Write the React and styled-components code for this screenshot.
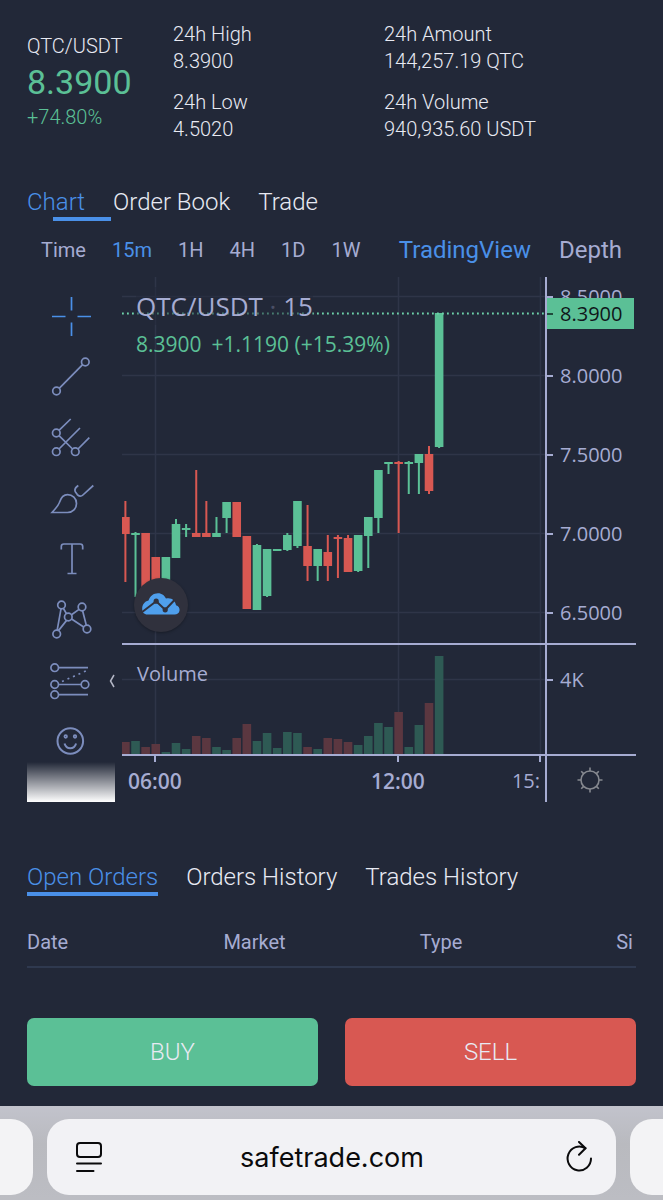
import React, { useState } from "react";
import styled, { createGlobalStyle } from "styled-components";

const colors = {
  background: "#222838",
  text: "#e8eaf3",
  muted: "#a6acd2",
  icon: "#7c8dbd",
  blue: "#4a90e8",
  green: "#5bc096",
  red: "#d85852",
  grid: "#2f3548",
};

const stats = [
  [
    { label: "24h High", value: "8.3900" },
    { label: "24h Low", value: "4.5020" },
  ],
  [
    { label: "24h Amount", value: "144,257.19 QTC" },
    { label: "24h Volume", value: "940,935.60 USDT" },
  ],
];

const intervals = ["Time", "15m", "1H", "4H", "1D", "1W"];
const prices = ["8.5000", "8.0000", "7.5000", "7.0000", "6.5000"];

// up, high, body top, body bottom, low, volume
const candles = [
  [0, 224, 240, 257, 305, 12],
  [1, 255, 256, 258, 320, 13],
  [0, 256, 256, 313, 313, 7],
  [0, 280, 280, 313, 313, 10],
  [1, 280, 280, 313, 313, 2],
  [1, 242, 247, 281, 281, 11],
  [1, 247, 251, 253, 260, 5],
  [0, 193, 256, 260, 260, 18],
  [0, 224, 256, 260, 260, 16],
  [1, 240, 256, 260, 260, 7],
  [1, 225, 225, 241, 256, 4],
  [0, 225, 225, 260, 260, 16],
  [0, 259, 259, 332, 332, 30],
  [1, 267, 268, 333, 333, 13],
  [1, 272, 272, 319, 320, 21],
  [1, 272, 272, 274, 274, 6],
  [1, 256, 258, 273, 274, 22],
  [1, 224, 224, 269, 271, 21],
  [0, 228, 269, 289, 304, 7],
  [1, 272, 272, 289, 304, 5],
  [0, 258, 275, 289, 304, 16],
  [0, 258, 260, 262, 301, 15],
  [0, 258, 261, 295, 295, 12],
  [1, 258, 258, 294, 295, 9],
  [1, 240, 240, 259, 291, 18],
  [1, 193, 193, 241, 256, 31],
  [1, 185, 185, 187, 197, 27],
  [0, 184, 185, 187, 256, 42],
  [1, 184, 185, 187, 217, 7],
  [1, 177, 177, 186, 217, 29],
  [0, 169, 177, 214, 217, 51],
  [1, 36, 36, 170, 171, 98],
];

const candleX = (index) => 3.4 + index * 10.12;

const Ring = ({ x, y }) => <circle cx={x} cy={y} r="3.8" />;

const tools = [
  {
    name: "Cross",
    icon: <path d="M4 22.5h13.5M29.5 22.5H43M23.5 3v13.5M23.5 28.5V42" />,
  },
  {
    name: "Trend line",
    icon: (
      <>
        <Ring x={37.3} y={7} />
        <Ring x={8.5} y={36} />
        <path d="M11.2 33.3 34.6 9.7" />
      </>
    ),
  },
  {
    name: "Pitchfork",
    icon: (
      <>
        <Ring x={8.3} y={17} />
        <Ring x={8.3} y={35.7} />
        <Ring x={27.3} y={35.7} />
        <path d="M11 19.7 24.6 33M11 14.3 22.7 3M11 33 32 12M30 33 41.3 21.7" />
      </>
    ),
  },
  {
    name: "Brush",
    icon: (
      <path d="M4 35.5h15.5c5.2 0 9-4 9-9s-4-8.8-9-8.8c-4.6 0-6.6 3.3-8 7.6C10 29.5 7 32 4 35.5ZM30.3 8.5c-3 2-4.3 4-2.8 6.5l1.8 2.6c1.5 1.9 4 1.9 5.6.4L45.3 8.5" />
    ),
  },
  {
    name: "Text",
    icon: <path d="M13.3 11.5V8.5q0-2.5 2.5-2.5h16.4q2.5 0 2.5 2.5v3M24 6v29.5M19.5 35.5h9" />,
  },
  {
    name: "Pattern",
    icon: (
      <>
        <Ring x={13.5} y={6} />
        <Ring x={34} y={8} />
        <Ring x={20.3} y={18} />
        <Ring x={8.7} y={35} />
        <Ring x={39} y={30} />
        <path d="M13 9.8 9.2 31.2M15.3 9.3l3.2 5.4M23.5 15.7l7.5-5.3M34.6 11.8l3.7 14.4M23.6 20 35.7 28M18.6 21.4 10.5 31.6" />
      </>
    ),
  },
  {
    name: "Prediction",
    icon: (
      <>
        <Ring x={6.7} y={7.7} />
        <Ring x={6.7} y={24.5} />
        <Ring x={37} y={24.5} />
        <Ring x={6.7} y={34.7} />
        <path d="M10.5 7.7H40M10.5 24.5h22.7M10.5 34.7H40" />
        <path d="M14 21.5 39 10.5" strokeDasharray="2 4" />
      </>
    ),
  },
  {
    name: "Emoji",
    icon: (
      <>
        <circle cx="22.3" cy="20" r="12.8" strokeWidth="2" />
        <circle cx="17.7" cy="15.5" r="1.3" />
        <circle cx="27" cy="15.5" r="1.3" />
        <path d="M16.5 22.5q1.5 4.8 5.8 4.8t5.8-4.8" strokeWidth="2" />
      </>
    ),
  },
];

function PriceChart() {
  return (
    <Plot viewBox="0 0 423 366" preserveAspectRatio="none" aria-hidden="true">
      <g stroke={colors.grid} strokeWidth="1.5">
        {[19.5, 98.5, 177.5, 256.5, 335.5].map((y) => (
          <line key={y} x1="0" x2="423" y1={y} y2={y} />
        ))}
        <path d="M33.5 0v366M276.5 0v366M418.5 0v366" />
      </g>
      {candles.map(([up, high, top, bottom, low], i) => (
        <g key={i} fill={up ? colors.green : colors.red}>
          <rect x={candleX(i) - 1} y={high} width="2" height={low - high} />
          <rect x={candleX(i) - 4.3} y={top} width="8.6" height={bottom - top} />
        </g>
      ))}
      <line
        x1="0"
        x2="423"
        y1="36.5"
        y2="36.5"
        stroke="#6fd3ab"
        strokeWidth="1.8"
        strokeDasharray="1.8 3.2"
      />
    </Plot>
  );
}

function VolumeChart() {
  return (
    <Plot viewBox="0 0 423 109" preserveAspectRatio="none" aria-hidden="true">
      <path
        d="M0 34.5h423M33.5 0v109M276.5 0v109M418.5 0v109"
        stroke={colors.grid}
        strokeWidth="1.5"
      />
      {candles.map((candle, i) => (
        <rect
          key={i}
          x={candleX(i) - 4.3}
          y={109 - candle[5]}
          width="8.6"
          height={candle[5]}
          fill={candle[0] ? "#2e5a54" : "#5b3740"}
        />
      ))}
    </Plot>
  );
}

function CloudLogo() {
  return (
    <svg width="54" height="54" viewBox="0 0 54 54" aria-hidden="true">
      <path
        fill="#4f9fec"
        d="M13.5 36.5c-3.5 0-5.5-2.2-5.3-6 .1-4 2.3-7 6.3-8 1.5-4.5 5-7.3 9.5-7.3 4 0 6.5 2.3 8 5.3 2.5-.7 6-.3 7.7 2 1.3 1.5 2 3 2.3 4.7 2.5.8 4 2.8 3.5 5.6-.5 2.5-2.3 3.7-5 3.7Z"
      />
      <path fill="none" stroke="#30313d" strokeWidth="2" d="M7.5 34.5 22.2 23.2l9 8.6L41 21.5" />
      <circle cx="22.2" cy="23.2" r="2.6" fill="#30313d" />
      <circle cx="31.2" cy="31.8" r="2.6" fill="#30313d" />
    </svg>
  );
}

export default function App() {
  const [view, setView] = useState("Chart");
  const [interval, setIntervalName] = useState("15m");
  const [chartType, setChartType] = useState("TradingView");
  const [orders, setOrders] = useState("Open Orders");

  return (
    <>
      <GlobalStyle />
      <Page>
        <Summary>
          <div>
            <Pair>QTC/USDT</Pair>
            <LastPrice>8.3900</LastPrice>
            <Change>+74.80%</Change>
          </div>
          {stats.map((column, i) => (
            <StatColumn key={i}>
              {column.map((stat) => (
                <div key={stat.label}>
                  <dt>{stat.label}</dt>
                  <dd>{stat.value}</dd>
                </div>
              ))}
            </StatColumn>
          ))}
        </Summary>

        <Tabs>
          {["Chart", "Order Book", "Trade"].map((name) => (
            <Tab key={name} $active={view === name} $shift={26} onClick={() => setView(name)}>
              {name}
            </Tab>
          ))}
        </Tabs>

        <IntervalBar>
          <Intervals>
            {intervals.map((name) => (
              <IntervalButton
                key={name}
                $active={interval === name}
                onClick={() => setIntervalName(name)}
              >
                {name}
              </IntervalButton>
            ))}
          </Intervals>
          <ChartTypes>
            {["TradingView", "Depth"].map((name) => (
              <ChartTypeButton
                key={name}
                $active={chartType === name}
                onClick={() => setChartType(name)}
              >
                {name}
              </ChartTypeButton>
            ))}
          </ChartTypes>
        </IntervalBar>

        <ChartArea>
          <Toolbar>
            {tools.map((tool, i) => (
              <ToolButton key={tool.name} aria-label={tool.name} $active={i === 0}>
                <svg width="46" height="45" viewBox="0 0 46 45" aria-hidden="true">
                  {tool.icon}
                </svg>
              </ToolButton>
            ))}
            <ToolbarFade />
            <CollapseButton aria-label="Hide toolbar">
              <svg width="6" height="14" viewBox="0 0 6 14" aria-hidden="true">
                <path d="M5 1 1.5 7 5 13" fill="none" stroke="#b4b7c6" strokeWidth="1.5" />
              </svg>
            </CollapseButton>
          </Toolbar>

          <ChartGrid>
            <Pane>
              <PriceChart />
              <Legend>
                <LegendTitle>
                  QTC/USDT <Dot>·</Dot> 15
                </LegendTitle>
                <LegendValues>
                  <span>8.3900</span>
                  <span>+1.1190 (+15.39%)</span>
                </LegendValues>
              </Legend>
              <LogoBadge href="#tradingview" aria-label="TradingView">
                <CloudLogo />
              </LogoBadge>
            </Pane>
            <Scale>
              <PriceLabels>
                {prices.map((price) => (
                  <ScaleLabel key={price}>{price}</ScaleLabel>
                ))}
              </PriceLabels>
              <PriceTag>8.3900</PriceTag>
            </Scale>

            <Pane>
              <VolumeChart />
              <VolumeTitle>Volume</VolumeTitle>
            </Pane>
            <Scale>
              <ScaleLabel>4K</ScaleLabel>
            </Scale>

            <TimeScale>
              <TimeLabel $bold>06:00</TimeLabel>
              <span />
              <TimeLabel $bold>12:00</TimeLabel>
              <span />
              <TimeLabel>15:</TimeLabel>
            </TimeScale>
            <Corner>
              <SettingsButton aria-label="Chart settings">
                <svg width="26" height="26" viewBox="0 0 26 26" aria-hidden="true">
                  <g fill="none" stroke="#85888f" strokeWidth="1.6">
                    <circle cx="13" cy="13" r="9" />
                    <path d="M13 0.5V4M13 22v3.5M0.5 13H4M22 13h3.5M4.2 4.2l2.4 2.4M19.4 19.4l2.4 2.4M4.2 21.8l2.4-2.4M19.4 6.6l2.4-2.4" />
                  </g>
                </svg>
              </SettingsButton>
            </Corner>
          </ChartGrid>
        </ChartArea>

        <OrderTabs>
          {["Open Orders", "Orders History", "Trades History"].map((name) => (
            <Tab key={name} $active={orders === name} $shift={0} onClick={() => setOrders(name)}>
              {name}
            </Tab>
          ))}
        </OrderTabs>

        <TableWrapper>
          <OrderTable>
            <thead>
              <tr>
                <th>Date</th>
                <th>Market</th>
                <th>Type</th>
                <th>Si</th>
              </tr>
            </thead>
          </OrderTable>
        </TableWrapper>

        <Actions>
          <TradeButton $color={colors.green}>BUY</TradeButton>
          <TradeButton $color={colors.red}>SELL</TradeButton>
        </Actions>
      </Page>

      <BrowserBar>
        <SideTab $side="left" />
        <AddressBar>
          <BarButton aria-label="Page menu">
            <svg width="28" height="32" viewBox="0 0 28 32" aria-hidden="true">
              <g fill="none" stroke="#0b0b0c" strokeWidth="2" strokeLinecap="round">
                <rect x="2" y="2" width="24" height="14" rx="3" />
                <path d="M2 22.5h24M2 30h16.5" />
              </g>
            </svg>
          </BarButton>
          <Address aria-label="Address" defaultValue="safetrade.com" />
          <BarButton aria-label="Reload">
            <svg width="28" height="32" viewBox="0 0 28 32" aria-hidden="true">
              <g fill="none" stroke="#0b0b0c" strokeWidth="2" strokeLinecap="round" strokeLinejoin="round">
                <path d="M26 17.5A11.7 12 0 1 1 20.5 7.3" />
                <path d="M14 1 20.5 7.3 14 13.8" />
              </g>
            </svg>
          </BarButton>
        </AddressBar>
        <SideTab $side="right" />
      </BrowserBar>
    </>
  );
}

const GlobalStyle = createGlobalStyle`
  * {
    box-sizing: border-box;
  }
  body {
    margin: 0;
    background: ${colors.background};
    color: ${colors.text};
    font-family: Roboto, "Liberation Sans", sans-serif;
    font-size: 20px;
    font-weight: 300;
  }
  button, input {
    margin: 0;
    padding: 0;
    border: 0;
    background: none;
    color: inherit;
    font: inherit;
  }
  button {
    cursor: pointer;
  }
  svg {
    display: block;
  }
`;

const Page = styled.main`
  padding: 21px 27px 20px;
`;

const Summary = styled.section`
  display: grid;
  grid-template-columns: 146fr 211fr 252fr;
  align-items: center;
  margin-bottom: 44px;
  line-height: 27px;
`;

const Pair = styled.div`
  color: ${colors.text};
`;

const LastPrice = styled.div`
  color: ${colors.green};
  font-size: 34px;
  font-weight: 400;
  line-height: 44px;
`;

const Change = styled.div`
  color: ${colors.green};
`;

const StatColumn = styled.dl`
  display: flex;
  flex-direction: column;
  gap: 14px;
  margin: 0;
  white-space: nowrap;
  dd {
    margin: 0;
  }
`;

const Tabs = styled.nav`
  display: flex;
  gap: 28px;
`;

const OrderTabs = styled(Tabs)`
  margin-top: 60px;
`;

const Tab = styled.button`
  position: relative;
  height: 34px;
  padding-bottom: 4px;
  color: ${(props) => (props.$active ? colors.blue : colors.text)};
  font-size: 24px;
  line-height: 30px;
  white-space: nowrap;
  &::after {
    content: "";
    display: ${(props) => (props.$active ? "block" : "none")};
    position: absolute;
    bottom: 0;
    left: ${(props) => props.$shift}px;
    width: 100%;
    height: 4px;
    background: ${colors.blue};
  }
`;

const IntervalBar = styled.div`
  display: flex;
  justify-content: space-between;
  align-items: center;
  height: 32px;
  margin: 13px 0 11px;
  padding: 0 14px;
`;

const Intervals = styled.div`
  display: flex;
  gap: 26px;
`;

const IntervalButton = styled.button`
  color: ${(props) => (props.$active ? colors.blue : colors.muted)};
  font-weight: 400;
`;

const ChartTypes = styled(Intervals)`
  gap: 28px;
`;

const ChartTypeButton = styled(IntervalButton)`
  font-size: 24px;
`;

const ChartArea = styled.section`
  display: flex;
  gap: 7px;
  height: 525px;
  font-family: "Open Sans", "Noto Sans", sans-serif;
  font-weight: 400;
  color: ${colors.muted};
`;

const Toolbar = styled.div`
  position: relative;
  display: flex;
  flex-direction: column;
  flex: 0 0 88px;
  padding-top: 9px;
`;

const ToolButton = styled.button`
  display: flex;
  justify-content: center;
  align-items: center;
  flex: 0 0 61px;
  svg {
    fill: none;
    stroke: ${(props) => (props.$active ? colors.blue : colors.icon)};
    stroke-width: 1.7px;
  }
`;

const ToolbarFade = styled.div`
  position: absolute;
  right: 0;
  bottom: 0;
  left: 0;
  height: 40px;
  background: linear-gradient(rgba(255, 255, 255, 0), #fff);
`;

const CollapseButton = styled.button`
  position: absolute;
  right: 0;
  bottom: 114px;
`;

const ChartGrid = styled.div`
  display: grid;
  grid-template-columns: minmax(0, 1fr) 91px;
  grid-template-rows: 368px 111px 46px;
  flex: 1;
  min-width: 0;
`;

const Pane = styled.div`
  position: relative;
  overflow: hidden;
  border-bottom: 2px solid ${colors.muted};
`;

const Plot = styled.svg`
  width: 100%;
  height: 100%;
`;

const Legend = styled.div`
  position: absolute;
  top: 10px;
  left: 14px;
  white-space: nowrap;
`;

const LegendTitle = styled.div`
  width: max-content;
  background: rgba(34, 40, 56, 0.5);
  font-size: 26px;
  line-height: 38px;
`;

const Dot = styled.span`
  color: #4a4f66;
`;

const LegendValues = styled.div`
  display: flex;
  gap: 10px;
  color: ${colors.green};
  font-size: 21px;
  line-height: 38px;
`;

const LogoBadge = styled.a`
  position: absolute;
  bottom: 11px;
  left: 12px;
  border-radius: 50%;
  background: #30313d;
  box-shadow: 0 1px 3px rgba(0, 0, 0, 0.3);
`;

const VolumeTitle = styled.div`
  position: absolute;
  top: 14px;
  left: 15px;
  line-height: 30px;
`;

const Scale = styled.div`
  position: relative;
  border-bottom: 2px solid ${colors.muted};
  border-left: 2px solid ${colors.muted};
  overflow: hidden;
`;

const PriceLabels = styled.div`
  margin-top: -20px;
`;

const ScaleLabel = styled.div`
  display: flex;
  align-items: center;
  gap: 7px;
  height: 79px;
  &::before {
    content: "";
    width: 6px;
    height: 2px;
    background: ${colors.muted};
  }
  ${Scale} > & {
    height: 69px;
  }
`;

const PriceTag = styled.div`
  position: absolute;
  top: 21px;
  left: 0;
  display: flex;
  align-items: center;
  gap: 7px;
  width: 87px;
  height: 31px;
  background: ${colors.green};
  color: #10161a;
  &::before {
    content: "";
    width: 6px;
    height: 2px;
    background: #1f4a3b;
  }
`;

const TimeScale = styled.div`
  display: grid;
  grid-template-columns: 66fr 177fr 66fr 76fr 38fr;
  overflow: hidden;
`;

const TimeLabel = styled.div`
  position: relative;
  display: flex;
  justify-content: center;
  padding-top: 10px;
  font-size: ${(props) => (props.$bold ? "21px" : "20px")};
  font-weight: ${(props) => (props.$bold ? 600 : 400)};
  line-height: 30px;
  &::before {
    content: "";
    position: absolute;
    top: 0;
    left: 32px;
    width: 2px;
    height: 6px;
    background: ${colors.muted};
  }
`;

const Corner = styled.div`
  display: flex;
  justify-content: center;
  align-items: center;
  padding: 2px 4px 0 0;
  border-left: 2px solid ${colors.muted};
`;

const SettingsButton = styled.button`
  display: flex;
`;

const TableWrapper = styled.div`
  margin-top: 31px;
  overflow: hidden;
`;

const OrderTable = styled.table`
  width: 129%;
  border-collapse: collapse;
  table-layout: fixed;
  color: ${colors.muted};
  th {
    height: 40px;
    padding: 0 0 10px;
    border-bottom: 2px solid #2f394f;
    font-weight: 400;
    line-height: 28px;
    text-align: left;
  }
`;

const Actions = styled.div`
  display: grid;
  grid-template-columns: 1fr 1fr;
  gap: 27px;
  margin-top: 50px;
`;

const TradeButton = styled.button`
  height: 68px;
  border-radius: 7px;
  background: ${(props) => props.$color};
  font-size: 24px;
`;

const BrowserBar = styled.footer`
  display: flex;
  gap: 14px;
  padding: 13px 0 5px;
  background: linear-gradient(#c2c3cc, #b9babf 40%, #bcbdc3);
`;

const SideTab = styled.div`
  flex: 0 0 33px;
  height: 76px;
  border-radius: ${(props) => (props.$side === "left" ? "0 22px 22px 0" : "22px 0 0 22px")};
  background: #f3f3f5;
`;

const AddressBar = styled.div`
  display: flex;
  align-items: center;
  flex: 1;
  min-width: 0;
  height: 76px;
  padding: 0 23px 0 28px;
  border-radius: 22px;
  background: #f2f2f5;
  color: #0b0b0c;
`;

const BarButton = styled.button`
  flex: 0 0 28px;
`;

const Address = styled.input`
  flex: 1;
  min-width: 0;
  padding-right: 4px;
  font-family: Inter, "Liberation Sans", sans-serif;
  font-size: 27px;
  font-weight: 400;
  text-align: center;
`;
